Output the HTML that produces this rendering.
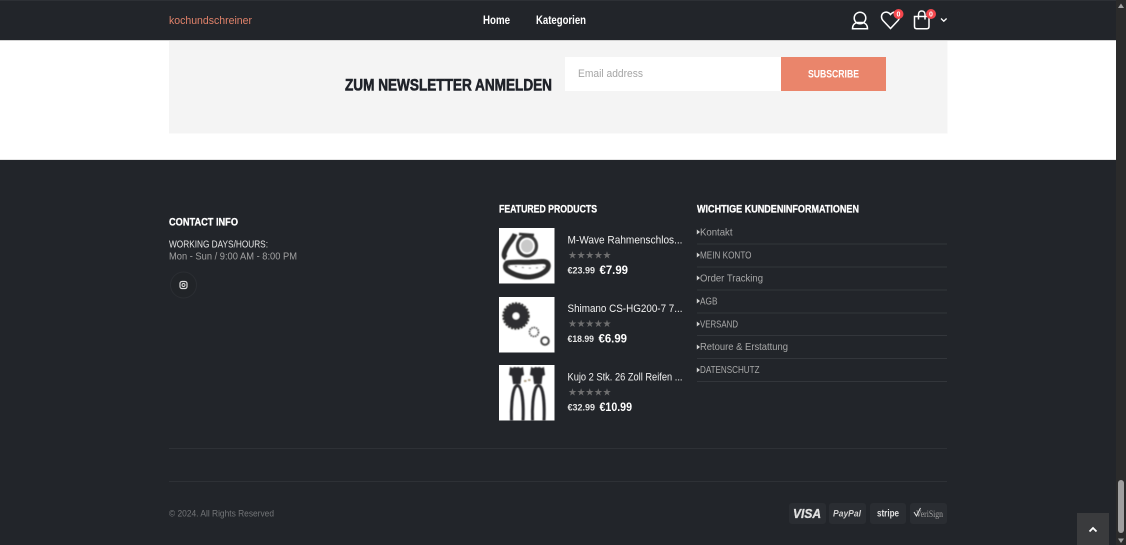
<!DOCTYPE html>
<html lang="de">
<head>
<meta charset="utf-8">
<title>kochundschreiner</title>
<style>
html,body{margin:0;padding:0;width:1126px;height:545px;overflow:hidden;background:#fff}
svg{display:block}
text{font-family:"Liberation Sans",sans-serif}
.b{font-weight:700}
</style>
</head>
<body>
<svg width="1126" height="545" viewBox="0 0 1126 545" xmlns="http://www.w3.org/2000/svg">
<defs><filter id="s" x="-10%" y="-10%" width="120%" height="120%"><feGaussianBlur stdDeviation=".45"/></filter></defs>
<rect width="1126" height="545" fill="#fff"/>
<!-- newsletter band -->
<rect x="169" y="41" width="778.500" height="92.500" fill="#f4f4f4"/>
<rect x="565" y="57" width="216" height="34" fill="#fff"/>
<rect x="781" y="57" width="105" height="34" fill="#ea856b"/>
<text x="345" y="90.500" class="b" font-size="16.500" fill="#1f2229" textLength="207" lengthAdjust="spacingAndGlyphs" stroke="#1f2229" stroke-width=".6">ZUM NEWSLETTER ANMELDEN</text>
<text x="578" y="77" font-size="11" fill="#a5a5a5" textLength="65" lengthAdjust="spacingAndGlyphs">Email address</text>
<text x="808" y="77.500" class="b" font-size="11" fill="#fff" textLength="51" lengthAdjust="spacingAndGlyphs">SUBSCRIBE</text>

<!-- header -->
<rect width="1116" height="40" fill="#22252a"/>
<rect y="0" width="1116" height="1" fill="#2d3035"/>
<rect y="40" width="1116" height="1" fill="#d2d2d2"/>
<text x="169" y="24" font-size="11" fill="#e0826a" textLength="83" lengthAdjust="spacingAndGlyphs">kochundschreiner</text>
<text x="483" y="24" class="b" font-size="11.500" fill="#fff" textLength="27" lengthAdjust="spacingAndGlyphs">Home</text>
<text x="536" y="24" class="b" font-size="11.500" fill="#fff" textLength="50" lengthAdjust="spacingAndGlyphs">Kategorien</text>
<!-- user -->
<g fill="none" stroke="#fff" stroke-width="1.500">
<circle cx="860" cy="18" r="5.800"/>
<path d="M852.500 28.800c0-4.500 3-6 5-6.300h5c2 .3 5 1.800 5 6.300z"/>
<!-- heart -->
<path d="M890.500 28.500l-7.500-8c-2-2.300-2-5.500 0-7.300 2-1.800 5.300-1.500 7.500 1.300 2.200-2.800 5.500-3.100 7.500-1.300 2 1.800 2 5 0 7.300z"/>
<!-- bag -->
<path d="M914.500 16.500h14.500v10c0 1.300-.8 2.200-2.200 2.200h-10.100c-1.400 0-2.200-.9-2.200-2.200z"/>
<path d="M918.500 19.500v-5c0-2.200 1.300-3.500 3.200-3.500s3.300 1.300 3.300 3.500v5"/>
<!-- chevron -->
<path d="M941 18.500l2.800 2.700 2.800-2.700" stroke-width="1.300"/>
</g>
<circle cx="898.500" cy="14" r="5" fill="#f4474d"/>
<text x="898.500" y="16.500" text-anchor="middle" class="b" font-size="7" fill="#fff">0</text>
<circle cx="931" cy="14" r="5" fill="#f4474d"/>
<text x="931" y="16.500" text-anchor="middle" class="b" font-size="7" fill="#fff">0</text>

<!-- footer -->
<rect y="160" width="1116" height="385" fill="#22252a"/>
<rect y="159" width="1116" height="1" fill="#e6e6e6"/>
<text x="169" y="225.500" class="b" font-size="11" fill="#fff" stroke="#fff" stroke-width=".3" textLength="69" lengthAdjust="spacingAndGlyphs">CONTACT INFO</text>
<text x="169" y="247.500" font-size="10.500" fill="#e6e6e6" textLength="99" lengthAdjust="spacingAndGlyphs">WORKING DAYS/HOURS:</text>
<text x="169" y="259.500" font-size="10.500" fill="#a2a2a2" textLength="128" lengthAdjust="spacingAndGlyphs">Mon - Sun / 9:00 AM - 8:00 PM</text>
<circle cx="183.500" cy="285" r="13" fill="#212428" stroke="#2b2e33"/>
<rect x="180" y="281.500" width="7" height="7" rx="2" fill="none" stroke="#ddd" stroke-width="1.200"/>
<circle cx="183.500" cy="285" r="1.500" fill="none" stroke="#ddd"/>

<text x="499" y="212.500" class="b" font-size="11" fill="#fff" stroke="#fff" stroke-width=".3" textLength="98" lengthAdjust="spacingAndGlyphs">FEATURED PRODUCTS</text>
<text x="697" y="212.500" class="b" font-size="11" fill="#fff" stroke="#fff" stroke-width=".3" textLength="162" lengthAdjust="spacingAndGlyphs">WICHTIGE KUNDENINFORMATIONEN</text>

<!-- product 1 -->
<rect x="499" y="228" width="55.500" height="55.500" fill="#fff"/>
<g fill="none" filter="url(#s)">
<ellipse cx="527" cy="246" rx="9.500" ry="10" stroke="#3a3a3a" stroke-width="3.200"/>
<ellipse cx="527" cy="246" rx="6" ry="6.500" fill="#c9c9c9" stroke="none"/>
<path d="M519 234l15 1" stroke="#333" stroke-width="2.500"/>
<path d="M515 234c-2 6-7 9-10 17-1.500 4-1 6 1 7" stroke="#2e2e2e" stroke-width="5"/>
<path d="M507 263c7-2 17 0 25-1 8 0 14-2 16 2 2 6-7 12-18 13-9 .5-18-3-23-7-2-2-2-5 0-7z" stroke="#2e2e2e" stroke-width="5"/>
<path d="M508 266c7-1 16 3 24 2 7 0 11-1 13-1" stroke="#8a8a8a" stroke-width="1" stroke-dasharray="2 5"/>
</g>
<!-- product 2 -->
<rect x="499" y="297" width="55.500" height="55.500" fill="#fff"/>
<g filter="url(#s)">
<circle cx="516" cy="316" r="12.500" fill="#2e2e30" stroke="#333" stroke-width="2.500" stroke-dasharray="2 1.200"/>
<circle cx="516" cy="316" r="3.500" fill="#fff"/>
<circle cx="534" cy="332" r="4.500" fill="none" stroke="#555" stroke-width="1.700" stroke-dasharray="1.500 .8"/>
<circle cx="545" cy="341" r="3.800" fill="none" stroke="#444" stroke-width="1.900"/>
</g>
<!-- product 3 -->
<rect x="499" y="365" width="55.500" height="55.500" fill="#fff"/>
<g filter="url(#s)">
<g fill="#2b2b2d">
<path d="M510 367l2.500 1 2-1 2 .5 2-.5 2 1 2.500-1 1 8-2.500 1-1 8h-7.500l-1-8-3-1z"/>
<path d="M531 367l2.500 1 2-1 2 .5 2-.5 2 1 2.500-1 1 8-2.500 1-1 8h-7.500l-1-8-3-1z"/>
</g>
<g fill="none" stroke="#2b2b2d" stroke-width="3">
<path d="M511.500 420.500c-.5-12 .5-27 3.500-33 1.500-2.500 3.500-2.500 5 0 3 6 3.500 21 3 33"/>
<path d="M532.500 420.500c-.5-12 .5-27 3.500-33 1.500-2.500 3.500-2.500 5 0 3 6 3.500 21 3 33"/>
</g>
<path d="M524 381h2.500M528 380h2.500" stroke="#a8987c" stroke-width="1.800"/>
</g>

<!-- product text -->
<text x="567.500" y="243.500" font-size="11" fill="#f0f0f0" textLength="115" lengthAdjust="spacingAndGlyphs">M-Wave Rahmenschlos...</text>
<text x="567.500" y="312" font-size="11" fill="#f0f0f0" textLength="115" lengthAdjust="spacingAndGlyphs">Shimano CS-HG200-7 7...</text>
<text x="567.500" y="380.500" font-size="11" fill="#f0f0f0" textLength="115" lengthAdjust="spacingAndGlyphs">Kujo 2 Stk. 26 Zoll Reifen ...</text>
<g fill="#6e6e6f" font-size="10">
<text x="568" y="258.500" textLength="43.500">★★★★★</text>
<text x="568" y="327" textLength="43.500">★★★★★</text>
<text x="568" y="395.500" textLength="43.500">★★★★★</text>
</g>
<text x="567.500" y="273.500" class="b" font-size="9.500" fill="#e6e6e6" textLength="27.500" lengthAdjust="spacingAndGlyphs">€23.99</text>
<text x="599.500" y="274" class="b" font-size="11.500" fill="#fff" textLength="28.500" lengthAdjust="spacingAndGlyphs">€7.99</text>
<text x="567.500" y="342" class="b" font-size="9.500" fill="#e6e6e6" textLength="26.500" lengthAdjust="spacingAndGlyphs">€18.99</text>
<text x="598.500" y="342.500" class="b" font-size="11.500" fill="#fff" textLength="28.500" lengthAdjust="spacingAndGlyphs">€6.99</text>
<text x="567.500" y="410.500" class="b" font-size="9.500" fill="#e6e6e6" textLength="27.500" lengthAdjust="spacingAndGlyphs">€32.99</text>
<text x="599.500" y="411" class="b" font-size="11.500" fill="#fff" textLength="32.500" lengthAdjust="spacingAndGlyphs">€10.99</text>

<!-- links -->
<g fill="#a8a8a8" font-size="10.500">
<text x="700" y="235.500" textLength="32.500" lengthAdjust="spacingAndGlyphs">Kontakt</text>
<text x="700" y="258.500" textLength="51.500" lengthAdjust="spacingAndGlyphs">MEIN KONTO</text>
<text x="700" y="281.500" textLength="63" lengthAdjust="spacingAndGlyphs">Order Tracking</text>
<text x="700" y="304.500" textLength="17.500" lengthAdjust="spacingAndGlyphs">AGB</text>
<text x="700" y="327.500" textLength="38" lengthAdjust="spacingAndGlyphs">VERSAND</text>
<text x="700" y="350" textLength="88" lengthAdjust="spacingAndGlyphs">Retoure &amp; Erstattung</text>
<text x="700" y="373" textLength="59.500" lengthAdjust="spacingAndGlyphs">DATENSCHUTZ</text>
</g>
<g fill="#d0d0d0">
<path d="M696.800 229.500l3.200 2.500-3.200 2.500z"/>
<path d="M696.800 252.500l3.200 2.500-3.200 2.500z"/>
<path d="M696.800 275.500l3.200 2.500-3.200 2.500z"/>
<path d="M696.800 298.500l3.200 2.500-3.200 2.500z"/>
<path d="M696.800 321.500l3.200 2.500-3.200 2.500z"/>
<path d="M696.800 344.500l3.200 2.500-3.200 2.500z"/>
<path d="M696.800 367.500l3.200 2.500-3.200 2.500z"/>
</g>
<g fill="#33363b">
<rect x="697" y="243.500" width="250" height="1"/>
<rect x="697" y="266.500" width="250" height="1"/>
<rect x="697" y="289.500" width="250" height="1"/>
<rect x="697" y="312.500" width="250" height="1"/>
<rect x="697" y="335" width="250" height="1"/>
<rect x="697" y="358" width="250" height="1"/>
<rect x="697" y="381" width="250" height="1"/>
<rect x="169" y="448" width="778" height="1" fill="#2e3136"/>
<rect x="169" y="481" width="778" height="1" fill="#2e3136"/>
</g>

<!-- bottom -->
<text x="169" y="516.500" font-size="9.500" fill="#737578" textLength="105" lengthAdjust="spacingAndGlyphs">© 2024. All Rights Reserved</text>
<g fill="#2a2d32">
<rect x="789" y="503" width="37" height="21" rx="3"/>
<rect x="829" y="503" width="37" height="21" rx="3"/>
<rect x="870" y="503" width="36" height="21" rx="3"/>
<rect x="910" y="503" width="37" height="21" rx="3"/>
</g>
<text x="793" y="518" class="b" font-size="12.500" font-style="italic" fill="#e0e0e0" stroke="#e0e0e0" stroke-width=".3" textLength="28" lengthAdjust="spacingAndGlyphs">VISA</text>
<text x="833" y="516.500" class="b" font-size="9" font-style="italic" fill="#d0d0d0" textLength="28" lengthAdjust="spacingAndGlyphs">PayPal</text>
<text x="877" y="516.500" class="b" font-size="10" fill="#e0e0e0" textLength="22" lengthAdjust="spacingAndGlyphs">stripe</text>
<text x="916" y="517" font-size="9" fill="#a0a0a0" textLength="27" lengthAdjust="spacingAndGlyphs" style="font-family:'Liberation Serif',serif">VeriSign</text>
<path d="M914 512l2.500 4 4-8" fill="none" stroke="#e0e0e0" stroke-width="1"/>

<!-- back to top -->
<rect x="1077" y="513" width="32" height="32" fill="#3a3b3d"/>
<path d="M1089.500 531.500l3.500-3.500 3.500 3.500" fill="none" stroke="#fff" stroke-width="1.800"/>

<!-- scrollbar -->
<rect x="1116" y="0" width="10" height="545" fill="#2b2b2b"/>
<path d="M1121 3.500l3 4.500h-6z" fill="#a0a0a0"/>
<rect x="1118" y="480" width="6" height="53" rx="3" fill="#9f9f9f"/>
<path d="M1121 543l-3-4.500h6z" fill="#a0a0a0"/>
</svg>
</body>
</html>
